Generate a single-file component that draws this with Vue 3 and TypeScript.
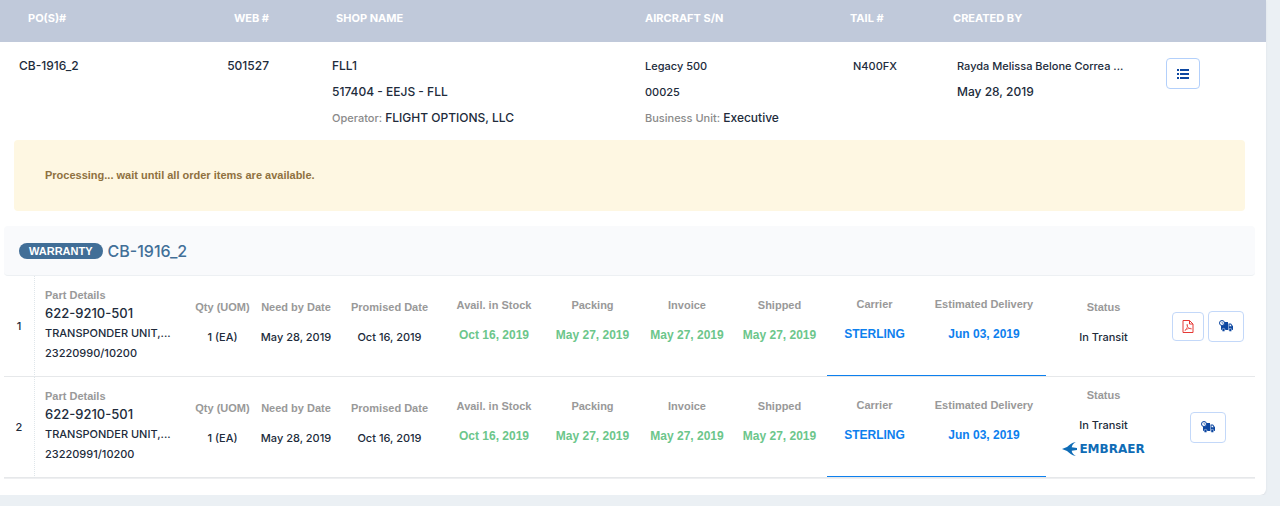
<script setup lang="ts">
interface Item {
  id: number
  serial: string
  hasPdf: boolean
  hasLogo: boolean
}

const items: Item[] = [
  { id: 1, serial: '23220990/10200', hasPdf: true, hasLogo: false },
  { id: 2, serial: '23220991/10200', hasPdf: false, hasLogo: true },
]

const milestones = [
  { label: 'Avail. in Stock', date: 'Oct 16, 2019' },
  { label: 'Packing', date: 'May 27, 2019' },
  { label: 'Invoice', date: 'May 27, 2019' },
  { label: 'Shipped', date: 'May 27, 2019' },
]
</script>

<template>
  <main class="card">
    <table class="orders">
      <colgroup>
        <col class="o-po" /><col class="o-web" /><col class="o-shop" /><col class="o-air" />
        <col class="o-tail" /><col class="o-by" /><col class="o-act" />
      </colgroup>
      <thead>
        <tr>
          <th class="po">PO(S)#</th>
          <th class="web">WEB #</th>
          <th class="shop">SHOP NAME</th>
          <th>AIRCRAFT S/N</th>
          <th class="tail">TAIL #</th>
          <th class="by">CREATED BY</th>
          <th></th>
        </tr>
      </thead>
      <tbody>
        <tr>
          <td class="po">CB-1916_2</td>
          <td class="web">501527</td>
          <td>
            <div>FLL1</div>
            <div>517404 - EEJS - FLL</div>
            <div><span class="key">Operator:</span> FLIGHT OPTIONS, LLC</div>
          </td>
          <td>
            <div class="small">Legacy 500</div>
            <div class="small">00025</div>
            <div><span class="key">Business Unit:</span> Executive</div>
          </td>
          <td><div class="small">N400FX</div></td>
          <td>
            <div class="small">Rayda Melissa Belone Correa ...</div>
            <div>May 28, 2019</div>
          </td>
          <td class="menu">
            <button class="btn list" type="button" aria-label="Order details">
              <svg width="12" height="10" viewBox="0 0 12 10" fill="#0d47a1">
                <path d="M0 0h2v2H0zM3 0h9v2H3zM0 4h2v2H0zM3 4h9v2H3zM0 8h2v2H0zM3 8h9v2H3z" />
              </svg>
            </button>
          </td>
        </tr>
      </tbody>
    </table>

    <p class="alert" role="status">Processing... wait until all order items are available.</p>

    <section class="group">
      <h2 class="group-head"><span class="pill">WARRANTY</span>CB-1916_2</h2>
      <table class="items">
        <colgroup>
          <col class="i-num" /><col class="i-part" /><col class="i-qty" /><col class="i-need" />
          <col class="i-prom" /><col class="i-avail" /><col class="i-pack" /><col class="i-inv" />
          <col class="i-ship" /><col class="i-car" /><col class="i-est" /><col class="i-stat" /><col class="i-act" />
        </colgroup>
        <tbody>
          <tr v-for="item in items" :key="item.id">
            <td class="num">{{ item.id }}</td>
            <td class="part">
              <div class="label">Part Details</div>
              <div class="pn">622-9210-501</div>
              <div class="line">TRANSPONDER UNIT,...</div>
              <div class="line">{{ item.serial }}</div>
            </td>
            <td class="plain"><div class="label">Qty (UOM)</div><div class="value">1 (EA)</div></td>
            <td class="plain"><div class="label">Need by Date</div><div class="value">May 28, 2019</div></td>
            <td class="plain"><div class="label">Promised Date</div><div class="value">Oct 16, 2019</div></td>
            <td v-for="m in milestones" :key="m.label" class="done">
              <div class="label">{{ m.label }}</div><div class="value">{{ m.date }}</div>
            </td>
            <td class="current"><div class="label">Carrier</div><div class="value">STERLING</div></td>
            <td class="current"><div class="label">Estimated Delivery</div><div class="value">Jun 03, 2019</div></td>
            <td class="plain" :class="{ branded: item.hasLogo }">
              <div class="label">Status</div>
              <div class="value">In Transit</div>
              <div v-if="item.hasLogo" class="logo">
                <svg width="15" height="14" viewBox="0 0 15 14" fill="#0f6cb6">
                  <path d="M0 7L5 5C7.500 3 9.500 .8 13.800 0C11 1.500 10 3.500 9.700 5.300L15 6V8L9.700 8.700C10 10.500 11 12.500 13.800 14C9.500 13.200 7.500 11 5 9Z" />
                </svg>
                <span>EMBRAER</span>
              </div>
            </td>
            <td class="actions">
              <div class="buttons">
                <button v-if="item.hasPdf" class="btn pdf" type="button" aria-label="Open PDF">
                  <svg width="12" height="13" viewBox="0 0 12 13" fill="none" stroke="#e53935">
                    <path d="M1 .5h6.500l3.500 3.500v8.500H1zM7.500 .5V4H11" />
                    <path d="M2.800 10.500C5 9 5.800 6.500 5.400 4.500C5 3.700 4.600 5 5.500 6.500C6.300 8 7.500 8.900 9.500 8.800C8.500 7.900 5.500 8.300 2.800 10.500Z" stroke-width=".7" />
                  </svg>
                </button>
                <button class="btn truck" type="button" aria-label="Track shipment">
                  <svg width="14" height="12" viewBox="0 0 14 12">
                    <path d="M2 2H9V10H2ZM9.500 3.500H12L14 6.300V10H9.500Z" fill="#0d47a1" />
                    <path d="M10.500 4.500H11.500L12.700 6.300H10.500Z" fill="#fff" />
                    <circle cx="4.500" cy="10" r="1.600" fill="#0d47a1" stroke="#fff" stroke-width=".5" />
                    <circle cx="11.300" cy="10" r="1.600" fill="#0d47a1" stroke="#fff" stroke-width=".5" />
                    <circle cx="3" cy="3" r="2.500" fill="#fff" stroke="#0d47a1" />
                    <path d="M3 1.600V3.200H4.300" fill="none" stroke="#0d47a1" stroke-width=".6" />
                  </svg>
                </button>
              </div>
            </td>
          </tr>
        </tbody>
      </table>
    </section>
  </main>
</template>

<style>
body {
  background: #ebf0f4;
}
</style>

<style scoped>
.card {
  margin-right: 14px;
  padding-bottom: 16px;
  background: #fff;
  border-radius: 0 0 6px 0;
  box-shadow: 0 1px 2px #d9dde2;
  font-family: Inter, "Liberation Sans", sans-serif;
  font-size: 12px;
  font-weight: 500;
  color: #212b3b;
}
table {
  width: 100%;
  table-layout: fixed;
  border-collapse: collapse;
}
td,
th {
  padding: 0;
  white-space: nowrap;
}
.o-po { width: 200px; }
.o-web { width: 118px; }
.o-shop { width: 313px; }
.o-air { width: 208px; }
.o-tail { width: 104px; }
.o-by { width: 209px; }
.o-act { width: 114px; }
.orders th {
  height: 42px;
  padding: 0 0 6px 14px;
  box-sizing: border-box;
  background: #c0c9da;
  color: #fff;
  font-size: 11px;
  font-weight: 700;
  text-align: left;
}
.orders td {
  padding: 11px 0 9px 14px;
  vertical-align: top;
  line-height: 26px;
}
.orders th.po { padding-left: 28px; }
.orders td.po { padding-left: 19px; }
.orders .web {
  padding-right: 49px;
  text-align: right;
}
.orders th.shop { padding-left: 18px; }
.orders th.tail { padding-left: 11px; }
.orders th.by { padding-left: 10px; }
.orders td.menu { padding-top: 16px; }
.small { font-size: 11px; }
.key {
  color: #8a8a8a;
  font-size: 11px;
}
.label,
.alert,
.pill,
.done .value,
.current .value {
  font-family: "Liberation Sans", Arial, sans-serif;
  font-weight: 700;
}
.btn {
  display: flex;
  align-items: center;
  justify-content: center;
  height: 31px;
  padding: 0;
  background: #fff;
  border: 1px solid #b3d0fb;
  border-radius: 4px;
}
.list { width: 34px; }
.pdf {
  width: 32px;
  height: 29px;
}
.truck { width: 36px; }
.alert {
  margin: 0 21px 15px 14px;
  padding: 25px 31px 26px;
  background: #fef7e2;
  border-radius: 4px;
  color: #8f7140;
  font-size: 11px;
  line-height: 20px;
}
.group { margin: 0 11px 0 4px; }
.group-head {
  display: flex;
  align-items: center;
  gap: 5px;
  height: 49px;
  margin: 0;
  padding: 0 15px;
  background: #f9fafc;
  border-bottom: 1px solid #edf0f3;
  border-radius: 4px;
  color: #426f98;
  font-size: 16px;
  font-weight: 500;
}
.pill {
  padding: 0 10px;
  background: #416e97;
  border-radius: 8px;
  color: #fff;
  font-size: 11px;
  line-height: 16px;
}
.i-num { width: 30px; }
.i-part { width: 153px; }
.i-qty { width: 71px; }
.i-need { width: 76px; }
.i-prom { width: 111px; }
.i-avail { width: 98px; }
.i-pack { width: 99px; }
.i-inv { width: 90px; }
.i-ship { width: 95px; }
.i-car { width: 95px; }
.i-est { width: 124px; }
.i-stat { width: 115px; }
.i-act { width: 94px; }
.items {
  border-collapse: separate;
  border-spacing: 0;
  border-bottom: 1px solid #eeeff1;
}
.items td {
  height: 101px;
  box-sizing: border-box;
  border-bottom: 1px solid #e6e8ea;
  font-size: 11px;
  line-height: 20px;
  text-align: center;
  vertical-align: middle;
}
.items td.part {
  padding: 0 0 3px 10px;
  border-left: 1px dotted #dfe6ea;
  text-align: left;
}
.label {
  color: #999;
  line-height: 20px;
}
.part .label { line-height: 16px; }
.pn {
  font-size: 13px;
}
.value { margin-top: 10px; }
.items td.plain { padding-bottom: 8px; }
.items td.branded { padding-bottom: 12px; }
.items td.done { padding-bottom: 12px; }
.done .value {
  color: #6cc68b;
  font-size: 12px;
}
.items td.current {
  padding-bottom: 14px;
  box-shadow: inset 0 -1px #0d80ee;
}
.current .value {
  color: #0d80ee;
  font-size: 12px;
}
.logo {
  display: flex;
  align-items: center;
  justify-content: center;
  gap: 2px;
  margin-top: 6px;
  height: 16px;
  color: #0f6cb6;
  font: 700 12px/16px "DejaVu Sans", sans-serif;
}
.buttons {
  display: flex;
  align-items: center;
  justify-content: center;
  gap: 4px;
}
.items td.actions { padding-right: 1px; }
.btn.truck,
.btn.pdf { border-color: #c3d8f9; }
</style>
